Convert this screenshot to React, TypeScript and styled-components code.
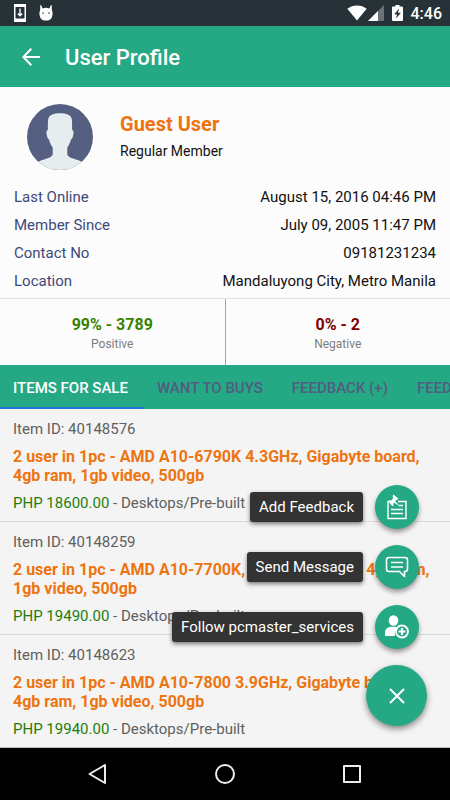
import React from "react";
import styled, { createGlobalStyle } from "styled-components";

const green = "#24a984";
const indigo = "#3e4a7a";
const orange = "#ee7411";

const GlobalStyle = createGlobalStyle`
  *, *::before, *::after { box-sizing: border-box; }
  body {
    margin: 0;
    background: #f4f4f4;
    font-family: Roboto, "Liberation Sans", sans-serif;
    font-size: 15px;
    line-height: 20px;
    color: #111;
  }
  button { font: inherit; color: inherit; background: none; border: 0; padding: 0; cursor: pointer; }
  h1, h2, h3, p, dl, dd, ul { margin: 0; padding: 0; }
  svg { display: block; }
`;

const Screen = styled.div`
  min-height: 100vh;
  display: flex;
  flex-direction: column;
  overflow: hidden;
`;

const StatusBar = styled.div`
  height: 26px;
  padding: 0 8px 0 13px;
  display: flex;
  align-items: center;
  justify-content: space-between;
  background: #263238;
  color: #fff;
`;

const StatusGroup = styled.div<{ $gap: number }>`
  display: flex;
  align-items: center;
  gap: ${(p) => p.$gap}px;
`;

const Clock = styled.span`
  font-size: 16px;
  font-weight: 500;
  padding-top: 2px;
`;

const AppBar = styled.header`
  height: 61px;
  padding: 0 22px;
  display: flex;
  align-items: center;
  gap: 25px;
  background: ${green};
  color: #fff;
`;

const AppTitle = styled.h1`
  font-size: 22px;
  line-height: 28px;
  font-weight: 500;
  padding-top: 3px;
`;

const Profile = styled.section`
  background: #fcfcfc;
  border-bottom: 1px solid #e2e2e2;
  padding: 17px 14px 3px;
`;

const Identity = styled.div`
  display: flex;
  align-items: center;
  gap: 27px;
  padding-left: 13px;
`;

const UserName = styled.h2`
  font-size: 20px;
  line-height: 28px;
  font-weight: 700;
  color: ${orange};
`;

const Role = styled.p`
  font-size: 14px;
  line-height: 26px;
`;

const Facts = styled.dl`
  margin-top: 13px;
`;

const Fact = styled.div`
  display: flex;
  justify-content: space-between;
  line-height: 28px;

  dt { color: ${indigo}; }
`;

const Stats = styled.section`
  display: flex;
  background: #fcfcfc;
`;

const Stat = styled.div`
  flex: 1;
  height: 66px;
  padding-top: 16px;
  text-align: center;

  & + & { border-left: 1px solid #a4a4a4; }
`;

const StatValue = styled.p<{ $color: string }>`
  font-size: 16px;
  font-weight: 700;
  color: ${(p) => p.$color};
`;

const StatLabel = styled.p`
  font-size: 12px;
  line-height: 18px;
  color: #7c7c7c;
`;

const Tabs = styled.nav`
  display: flex;
  height: 44px;
  background: ${green};
  overflow: hidden;
`;

const Tab = styled.button<{ $active?: boolean }>`
  flex: none;
  padding: 4px 16px 0 13px;
  font-weight: 500;
  white-space: nowrap;
  color: ${(p) => (p.$active ? "#fff" : "#535b82")};
  border-bottom: 2px solid ${(p) => (p.$active ? "#1976d2" : "transparent")};
`;

const Content = styled.main`
  position: relative;
  flex: 1;
`;

const ItemList = styled.ul`
  list-style: none;
`;

const Item = styled.li`
  padding: 10px 13px 8px;
  border-bottom: 1px solid #dadada;
  color: #606060;

  &:last-child { border-bottom-color: #bdbdbd; }
`;

const ItemTitle = styled.h3`
  margin: 8px 0;
  font-size: 16px;
  line-height: 19px;
  font-weight: 700;
  color: ${orange};
`;

const Price = styled.span`
  color: #1f7d0c;
`;

const Actions = styled.div`
  position: absolute;
  right: 23px;
  bottom: 22px;
  display: flex;
  flex-direction: column;
  align-items: flex-end;
  gap: 16px;
`;

const Action = styled.button`
  display: flex;
  align-items: center;
  gap: 12px;
  margin-right: 8px;
`;

const ActionLabel = styled.span`
  padding: 5px 9px;
  border-radius: 3px;
  background: #333;
  color: #fff;
  box-shadow: 0 2px 4px rgba(0, 0, 0, 0.5);
`;

const Disc = styled.span`
  width: 44px;
  height: 44px;
  display: grid;
  place-items: center;
  border-radius: 50%;
  background: ${green};
  color: #fff;
  box-shadow: 0 3px 5px rgba(0, 0, 0, 0.4);
`;

const CloseButton = styled.button`
  && {
    width: 61px;
    height: 61px;
    display: grid;
    place-items: center;
    border-radius: 50%;
    background: ${green};
    color: #fff;
    box-shadow: 0 3px 6px rgba(0, 0, 0, 0.45);
  }
`;

const NavBar = styled.footer`
  height: 52px;
  display: flex;
  justify-content: center;
  align-items: center;
  gap: 103px;
  background: #000;
  color: #eee;
`;

const DownloadIcon = () => (
  <svg width="14" height="20" viewBox="0 0 14 20">
    <path fillRule="evenodd" fill="#fff" d="M1 1h12v18H1zM2.5 4v11.500h9V4z" />
    <path d="M7 5.500v7M4.800 10.500L7 12.700l2.200-2.200" fill="none" stroke="#fff" strokeWidth="1.400" />
  </svg>
);

const DroidIcon = () => (
  <svg width="14" height="18" viewBox="0 0 14 18">
    <path fill="#fff" d="M1.300 1l.7 0 1.700 3.400q3.300-1.200 6.600 0L12 1h.7l.2 5.500q.7.900.7 3-.1 2.800-1.200 4.700-1.400 2.400-5.400 2.400t-5.400-2.400Q.5 12.300.4 9.500q0-2.100.7-3z" />
    <circle cx="4" cy="9" r=".8" fill="#263238" />
    <circle cx="10" cy="9" r=".8" fill="#263238" />
  </svg>
);

const WifiIcon = () => (
  <svg width="20" height="16" viewBox="0 0 20 16">
    <path fill="#fff" d="M10 15.500L.3 3.800C3 1.600 6.300.4 10 .4s7 1.200 9.700 3.400z" />
  </svg>
);

const SignalIcon = () => (
  <svg width="16" height="16" viewBox="0 0 16 16">
    <path fill="#6a7276" d="M16 0v16H0z" />
    <path fill="#fff" d="M10 6v10H0z" />
  </svg>
);

const BatteryIcon = () => (
  <svg width="11" height="16" viewBox="0 0 11 16">
    <path fill="#fff" d="M3.500 0h4v1.600H10q1 0 1 1V15q0 1-1 1H1q-1 0-1-1V2.600q0-1 1-1h2.500z" />
    <path fill="#263238" d="M7 3.500L2.200 9.500h2.900L4 13.800l4.900-6.100H6z" />
  </svg>
);

const BackArrow = () => (
  <svg width="18" height="18" viewBox="0 0 18 18" fill="none" stroke="currentColor" strokeWidth="2">
    <path d="M9.300.8L1.400 9l7.900 8.200M1.400 9H18" />
  </svg>
);

const Avatar = () => (
  <svg width="66" height="66" viewBox="0 0 66 66" role="img" aria-label="Guest User">
    <defs>
      <clipPath id="avatar-circle"><circle cx="33" cy="33" r="33" /></clipPath>
    </defs>
    <g clipPath="url(#avatar-circle)">
      <path fill="#555f82" d="M0 0h66v66H0z" />
      <path fill="#e6edee" d="M33 9.300c6.500 0 10.300 1.700 11.600 5 .6 2 .5 6.500.5 11.700 1.600.3 1.700 2.500 1.200 4.800-.5 2.400-1 4.200-2.300 4.700-.8 3.300-1.900 5.500-3.700 8v6.700c.5 2.600 4 3.600 7.200 4.800 2.800 1 5.200 1.500 7.500 3V66H11v-8c2.300-1.500 4.700-2 7.500-3 3.200-1.200 6.700-2.200 7.200-4.800v-6.700c-1.800-2.500-2.900-4.700-3.700-8-1.300-.5-1.800-2.300-2.300-4.700-.5-2.300-.4-4.500 1.200-4.800 0-5.200-.1-9.700.5-11.700 1.300-3.300 5.100-5 11.600-5z" />
    </g>
  </svg>
);

const NoteIcon = () => (
  <svg width="20" height="26" viewBox="0 0 20 26">
    <path d="M11 7.500h8v17H1v-17h2" fill="none" stroke="#fff" strokeWidth="1.400" />
    <path d="M4 15.500h12M4 19.500h12" stroke="#fff" strokeWidth="1.700" />
    <path d="M12 11.500h4" stroke="#fff" strokeWidth="1.500" />
    <path fill="#fff" d="M6.500.5l5 4.200-1 1.100-1.300-.1-.9 1.600 4.700 5.200-5.800-3.700-.9 1 .2 1.500-1.100.9-4-4.900 1.200-1 1.700.2 1.900-2.400-.6-2.200z" />
  </svg>
);

const ChatIcon = () => (
  <svg width="24" height="22" viewBox="0 0 24 22" fill="none" stroke="#fff">
    <path strokeWidth="1.600" strokeLinejoin="round" d="M4 1.500h16Q22.500 1.500 22.500 4v9q0 2.500-2.500 2.500h-.5v5l-5-5H4Q1.500 15.500 1.500 13V4Q1.500 1.500 4 1.500z" />
    <path strokeWidth="1.500" d="M6 6.500h12M6 11h12" />
  </svg>
);

const FollowIcon = () => (
  <svg width="24" height="24" viewBox="0 0 24 24">
    <ellipse cx="8.500" cy="5.500" rx="4.800" ry="5.200" fill="#fff" />
    <path fill="#fff" d="M0 21v-3.500C0 13.500 3 11.700 8.500 11.700c2 0 3.500.2 4.800.8A8 8 0 0 0 10 21z" />
    <circle cx="17" cy="16.500" r="6" fill="none" stroke="#fff" strokeWidth="1.800" />
    <path d="M17 13v7M13.500 16.500h7" stroke="#fff" strokeWidth="2.200" />
  </svg>
);

const CloseIcon = () => (
  <svg width="16" height="16" viewBox="0 0 16 16">
    <path d="M1 1l14 14M15 1L1 15" stroke="currentColor" strokeWidth="2" />
  </svg>
);

const facts = [
  ["Last Online", "August 15, 2016 04:46 PM"],
  ["Member Since", "July 09, 2005 11:47 PM"],
  ["Contact No", "09181231234"],
  ["Location", "Mandaluyong City, Metro Manila"],
];

const tabs = ["ITEMS FOR SALE", "WANT TO BUYS", "FEEDBACK (+)", "FEEDBACK (-)"];

const items = [
  { id: "40148576", title: "2 user in 1pc - AMD A10-6790K 4.3GHz, Gigabyte board, 4gb ram, 1gb video, 500gb", price: "18600.00" },
  { id: "40148259", title: "2 user in 1pc - AMD A10-7700K, Gigabyte board, 4gb ram, 1gb video, 500gb", price: "19490.00" },
  { id: "40148623", title: "2 user in 1pc - AMD A10-7800 3.9GHz, Gigabyte board, 4gb ram, 1gb video, 500gb", price: "19940.00" },
];

const actions = [
  { label: "Add Feedback", Icon: NoteIcon },
  { label: "Send Message", Icon: ChatIcon },
  { label: "Follow pcmaster_services", Icon: FollowIcon },
];

export default function App() {
  return (
    <>
      <GlobalStyle />
      <Screen>
        <StatusBar>
          <StatusGroup $gap={12}>
            <DownloadIcon />
            <DroidIcon />
          </StatusGroup>
          <StatusGroup $gap={8}>
            <StatusGroup $gap={1}>
              <WifiIcon />
              <SignalIcon />
            </StatusGroup>
            <BatteryIcon />
            <Clock>4:46</Clock>
          </StatusGroup>
        </StatusBar>
        <AppBar>
          <button aria-label="Back"><BackArrow /></button>
          <AppTitle>User Profile</AppTitle>
        </AppBar>
        <Profile>
          <Identity>
            <Avatar />
            <div>
              <UserName>Guest User</UserName>
              <Role>Regular Member</Role>
            </div>
          </Identity>
          <Facts>
            {facts.map(([name, value]) => (
              <Fact key={name}>
                <dt>{name}</dt>
                <dd>{value}</dd>
              </Fact>
            ))}
          </Facts>
        </Profile>
        <Stats>
          <Stat>
            <StatValue $color="#388400">99% - 3789</StatValue>
            <StatLabel>Positive</StatLabel>
          </Stat>
          <Stat>
            <StatValue $color="#7c0000">0% - 2</StatValue>
            <StatLabel>Negative</StatLabel>
          </Stat>
        </Stats>
        <Tabs>
          {tabs.map((t, i) => (
            <Tab key={t} $active={i === 0}>{t}</Tab>
          ))}
        </Tabs>
        <Content>
          <ItemList>
            {items.map((it) => (
              <Item key={it.id}>
                <p>Item ID: {it.id}</p>
                <ItemTitle>{it.title}</ItemTitle>
                <p><Price>PHP {it.price}</Price> - Desktops/Pre-built</p>
              </Item>
            ))}
          </ItemList>
          <Actions>
            {actions.map(({ label, Icon }) => (
              <Action key={label}>
                <ActionLabel>{label}</ActionLabel>
                <Disc><Icon /></Disc>
              </Action>
            ))}
            <CloseButton aria-label="Close menu"><CloseIcon /></CloseButton>
          </Actions>
        </Content>
        <NavBar>
          <button aria-label="Back">
            <svg width="24" height="24" viewBox="0 0 24 24" fill="none" stroke="currentColor" strokeWidth="2" strokeLinejoin="round">
              <path d="M19 3v18L3.500 12z" />
            </svg>
          </button>
          <button aria-label="Home">
            <svg width="24" height="24" viewBox="0 0 24 24" fill="none" stroke="currentColor" strokeWidth="2">
              <circle cx="12" cy="12" r="9" />
            </svg>
          </button>
          <button aria-label="Recent apps">
            <svg width="24" height="24" viewBox="0 0 24 24" fill="none" stroke="currentColor" strokeWidth="2" strokeLinejoin="round">
              <path d="M4 4h16v16H4z" />
            </svg>
          </button>
        </NavBar>
      </Screen>
    </>
  );
}
